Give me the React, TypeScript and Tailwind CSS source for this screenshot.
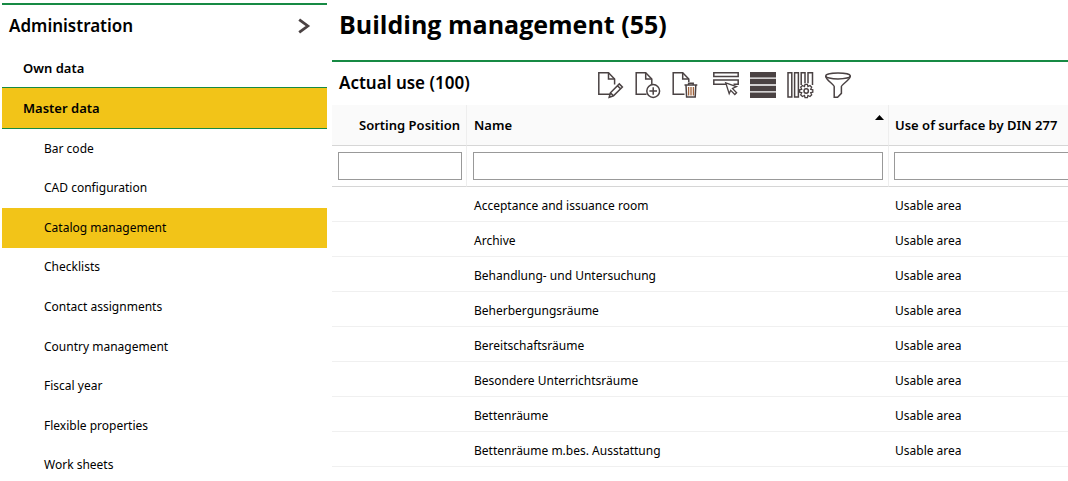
import React from 'react';

const NAV_ITEMS = [
  'Bar code',
  'CAD configuration',
  'Catalog management',
  'Checklists',
  'Contact assignments',
  'Country management',
  'Fiscal year',
  'Flexible properties',
  'Work sheets',
];

const ROWS = [
  'Acceptance and issuance room',
  'Archive',
  'Behandlung- und Untersuchung',
  'Beherbergungsräume',
  'Bereitschaftsräume',
  'Besondere Unterrichtsräume',
  'Bettenräume',
  'Bettenräume m.bes. Ausstattung',
];

const Icon: React.FC<{ children: React.ReactNode }> = ({ children }) => (
  <svg viewBox="0 0 28 28" className="block size-7" fill="none" stroke="#4a4243" strokeWidth="1.5" aria-hidden="true">
    {children}
  </svg>
);

const ToolButton: React.FC<{ label: string; className?: string; children: React.ReactNode }> = ({ label, className, children }) => (
  <button type="button" aria-label={label} className={className}>
    <Icon>{children}</Icon>
  </button>
);

const Toolbar: React.FC = () => (
  <div className="flex gap-[9px] pt-0.5">
    <ToolButton label="Edit">
      <path d="M13.5 23.2H1.8V1.8H11.5L17.6 8V13.5" />
      <path d="M11.5 1.8V8H17.6" />
      <path d="M12.2 26.3L13.4 21.8L22.3 12.9L25.4 16L16.5 24.9ZM13.4 21.8L16.5 24.9M20.5 14.8L23.5 17.8" />
    </ToolButton>
    <ToolButton label="Add">
      <path d="M12.5 23.2H2.2V1.8H11.7L17.8 8V13" />
      <path d="M11.7 1.8V8H17.8" />
      <circle cx="19.2" cy="20" r="6.4" />
      <path d="M19.2 16.2V23.8M15.4 20H23" />
    </ToolButton>
    <ToolButton label="Delete">
      <path d="M13.5 23.2H2.2V1.8H11.7L17.8 8V11" />
      <path d="M11.7 1.8V8H17.8" />
      <path d="M13.5 14H26.3M17.6 14V12.2H22.2V14M15 14L15.6 26H24.2L24.8 14" />
      <path d="M17.6 16V24.5M20 16V24.5M22.4 16V24.5" stroke="#a0623a" strokeWidth="1.3" />
    </ToolButton>
    <ToolButton label="Select" className="ml-1">
      <path d="M1.8 1.8H26.2V5.6H1.8ZM14 13.2H1.8V9H26.2V13.2H21.5" />
      <path d="M13.7 11.8L24.5 15.6L20.5 17.5L24.6 21.7L22.8 23.5L18.7 19.3L17.2 22.6Z" strokeWidth="1.3" />
    </ToolButton>
    <ToolButton label="Rows">
      <path d="M1 1H27V6.4H1ZM1 7.8H27V13.3H1ZM1 14.7H27V20.2H1ZM1 21.6H27V27H1Z" fill="#4a4243" stroke="none" />
    </ToolButton>
    <ToolButton label="Columns">
      <path d="M2 1.8H5.8V26H2ZM8.6 26V1.8H12.4V26ZM15.2 14V1.8H19V12.2M22 12.2V1.8H26.5V14" />
      <circle cx="20.2" cy="20" r="2.2" />
      <path d="M19 13.4H21.4L21.9 15.5L24 14.5L25.7 16.2L24.7 18.3L26.8 18.8V21.2L24.7 21.7L25.7 23.8L24 25.5L21.9 24.5L21.4 26.6H19L18.5 24.5L16.4 25.5L14.7 23.8L15.7 21.7L13.6 21.2V18.8L15.7 18.3L14.7 16.2L16.4 14.5L18.5 15.5Z" strokeWidth="1.3" />
    </ToolButton>
    <ToolButton label="Filter">
      <ellipse cx="15" cy="4.9" rx="12.3" ry="3" />
      <path d="M2.7 5C2.7 9.2 11.2 13.2 11.2 15.6V26.2H14.6L18.4 22.4V15.6C18.4 13.2 27.3 9.2 27.3 5" />
    </ToolButton>
  </div>
);

const Sidebar: React.FC = () => (
  <nav className="ml-0.5 mt-[3px] w-[325px] shrink-0 border-t-2 border-[#178a44]">
    <div className="flex h-[42px] items-center justify-between pl-[7px] pr-4">
      <h2 className="text-[17px] font-semibold">Administration</h2>
      <button type="button" aria-label="Expand">
        <svg viewBox="0 0 14 16" className="block h-4 w-3.5" fill="none" stroke="#4a4243" strokeWidth="2.8" aria-hidden="true">
          <path d="M2.2 1.6L10.8 8L2.2 14.4" />
        </svg>
      </button>
    </div>
    <a href="#own-data" className="flex h-10 items-center pl-[21px] pt-0.5 text-[13px] font-semibold">Own data</a>
    <a
      href="#master-data"
      className="flex h-[42px] items-center border-y border-[#178a44] bg-[#f2c418] pl-[21px] text-[13px] font-semibold"
    >
      Master data
    </a>
    <ul className="grid h-[356px] auto-rows-fr">
      {NAV_ITEMS.map((item) => (
        <li key={item} className={item === 'Catalog management' ? 'bg-[#f2c418]' : ''}>
          <a href="#catalog" className="flex h-full items-center pl-[42px]">{item}</a>
        </li>
      ))}
    </ul>
  </nav>
);

const CatalogTable: React.FC = () => (
  <table className="w-full min-w-[900px] table-fixed border-separate border-spacing-0 text-left">
    <colgroup>
      <col className="w-[135px]" />
      <col className="w-[422px]" />
      <col />
    </colgroup>
    <thead className="text-[13px]">
      <tr className="h-[41px] bg-[#fafafa]">
        <th className="border-b border-r border-b-[#d6d6d6] border-r-[#eeeeee] pr-1.5 text-right font-semibold">Sorting Position</th>
        <th className="border-b border-r border-b-[#d6d6d6] border-r-[#eeeeee] pl-[7px] pr-1 font-semibold">
          <div className="flex items-center justify-between">
            Name
            <svg viewBox="0 0 9 5" className="mb-4 h-[5px] w-[9px]" aria-hidden="true">
              <path d="M0 5L4.5 0L9 5Z" fill="#000" />
            </svg>
          </div>
        </th>
        <th className="border-b border-[#d6d6d6] pl-1.5 font-semibold">Use of surface by DIN 277</th>
      </tr>
      <tr className="h-[41px]">
        <td className="border-b border-r border-b-[#d6d6d6] border-r-[#eeeeee] pl-1.5 pr-1">
          <input type="text" aria-label="Filter sorting position" className="block h-7 w-full border border-[#999999] px-1 outline-none" />
        </td>
        <td className="border-b border-r border-b-[#d6d6d6] border-r-[#eeeeee] pl-1.5 pr-[5px]">
          <input type="text" aria-label="Filter name" className="block h-7 w-full border border-[#999999] px-1 outline-none" />
        </td>
        <td className="border-b border-[#d6d6d6] pl-[5px]">
          <input type="text" aria-label="Filter use of surface" className="block h-7 w-full border border-[#999999] px-1 outline-none" />
        </td>
      </tr>
    </thead>
    <tbody>
      {ROWS.map((name) => (
        <tr key={name} className="h-[35px]">
          <td className="border-b border-[#f0f0f0]" />
          <td className="border-b border-[#f0f0f0] pl-[7px] pt-1">{name}</td>
          <td className="border-b border-[#f0f0f0] pl-1.5 pt-1">Usable area</td>
        </tr>
      ))}
    </tbody>
  </table>
);

export default function App() {
  return (
    <div className="flex h-screen gap-[5px] overflow-hidden bg-white font-['Noto_Sans',sans-serif] text-xs leading-5 text-black">
      <Sidebar />
      <main className="min-w-0 flex-1 overflow-hidden">
        <h1 className="flex h-[60px] items-center pb-3 pl-[7px] font-['Open_Sans',sans-serif] text-[25px] font-bold">
          Building management (55)
        </h1>
        <div className="flex h-[45px] items-center border-t-2 border-[#178a44] pl-[7px]">
          <h2 className="w-[258px] pb-0.5 text-[17px] font-semibold">Actual use (100)</h2>
          <Toolbar />
        </div>
        <CatalogTable />
      </main>
    </div>
  );
}
